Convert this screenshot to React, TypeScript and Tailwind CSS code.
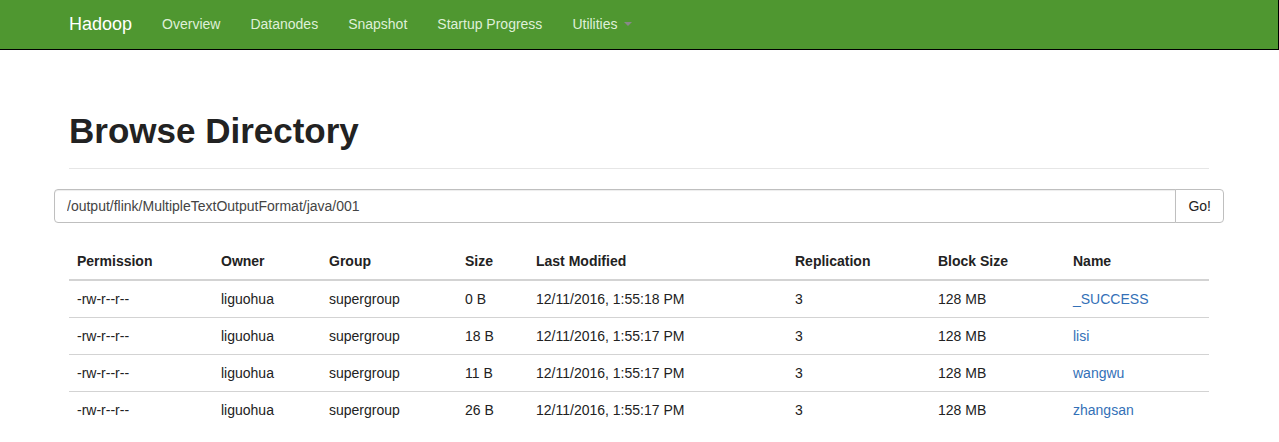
const navItems = ['Overview', 'Datanodes', 'Snapshot', 'Startup Progress'];

const columns = [
  { label: 'Permission', width: 'w-[144px]' },
  { label: 'Owner', width: 'w-[108px]' },
  { label: 'Group', width: 'w-[136px]' },
  { label: 'Size', width: 'w-[71px]' },
  { label: 'Last Modified', width: 'w-[259px]' },
  { label: 'Replication', width: 'w-[143px]' },
  { label: 'Block Size', width: 'w-[135px]' },
  { label: 'Name', width: 'w-[144px]' },
];

const files = [
  { name: '_SUCCESS', size: '0 B', modified: '12/11/2016, 1:55:18 PM' },
  { name: 'lisi', size: '18 B', modified: '12/11/2016, 1:55:17 PM' },
  { name: 'wangwu', size: '11 B', modified: '12/11/2016, 1:55:17 PM' },
  { name: 'zhangsan', size: '26 B', modified: '12/11/2016, 1:55:17 PM' },
];

function NavBar() {
  return (
    <header className="border-r border-b border-black bg-[#4f9730]">
      <nav className="mx-auto flex max-w-[1170px] items-center gap-[30px] px-[15px] pt-3.5 pb-[15px] text-[#dff0d8]">
        <a href="#" className="text-lg leading-5 text-white">
          Hadoop
        </a>
        {navItems.map((item) => (
          <a key={item} href="#" className="whitespace-nowrap">
            {item}
          </a>
        ))}
        <button type="button" className="flex items-center gap-1.5">
          Utilities
          <svg width="8" height="4" viewBox="0 0 8 4" fill="#888888" aria-hidden="true">
            <path d="M0 0h8L4 4z" />
          </svg>
        </button>
      </nav>
    </header>
  );
}

function PathForm() {
  return (
    <form className="-mx-[15px] flex" onSubmit={(e) => e.preventDefault()}>
      <input
        type="text"
        aria-label="Directory path"
        defaultValue="/output/flink/MultipleTextOutputFormat/java/001"
        className="h-[34px] min-w-0 flex-1 rounded-l border border-[#bfbfbf] px-3 text-[#444444] shadow-[inset_0_1px_1px_rgba(0,0,0,0.075)] outline-none"
      />
      <button
        type="submit"
        className="-ml-px h-[34px] rounded-r border border-[#bfbfbf] bg-white px-3 text-[#222222]"
      >
        Go!
      </button>
    </form>
  );
}

function FileTable() {
  return (
    <table className="mt-5 w-full table-fixed border-collapse text-left">
      <thead>
        <tr className="border-b-2 border-[#d3d3d3]">
          {columns.map((column) => (
            <th key={column.label} className={`${column.width} p-2 font-bold`}>
              {column.label}
            </th>
          ))}
        </tr>
      </thead>
      <tbody>
        {files.map((file) => (
          <tr key={file.name} className="border-t border-[#d3d3d3] first:border-t-0">
            <td className="p-2">-rw-r--r--</td>
            <td className="p-2">liguohua</td>
            <td className="p-2">supergroup</td>
            <td className="p-2">{file.size}</td>
            <td className="p-2">{file.modified}</td>
            <td className="p-2">3</td>
            <td className="p-2">128 MB</td>
            <td className="p-2">
              <a href="#" className="text-[#3370b7]">
                {file.name}
              </a>
            </td>
          </tr>
        ))}
      </tbody>
    </table>
  );
}

export default function App() {
  return (
    <div className="bg-white font-['Liberation_Sans',Arial,sans-serif] text-sm leading-5 text-[#222222]">
      <NavBar />
      <div className="pr-px">
        <main className="mx-auto max-w-[1170px] px-[15px] pt-[61px]">
          <div className="mb-5 border-b border-[#e6e6e6] pb-[17px]">
            <h1 className="text-[35px] leading-10 font-bold">Browse Directory</h1>
          </div>
          <PathForm />
          <FileTable />
        </main>
      </div>
    </div>
  );
}
